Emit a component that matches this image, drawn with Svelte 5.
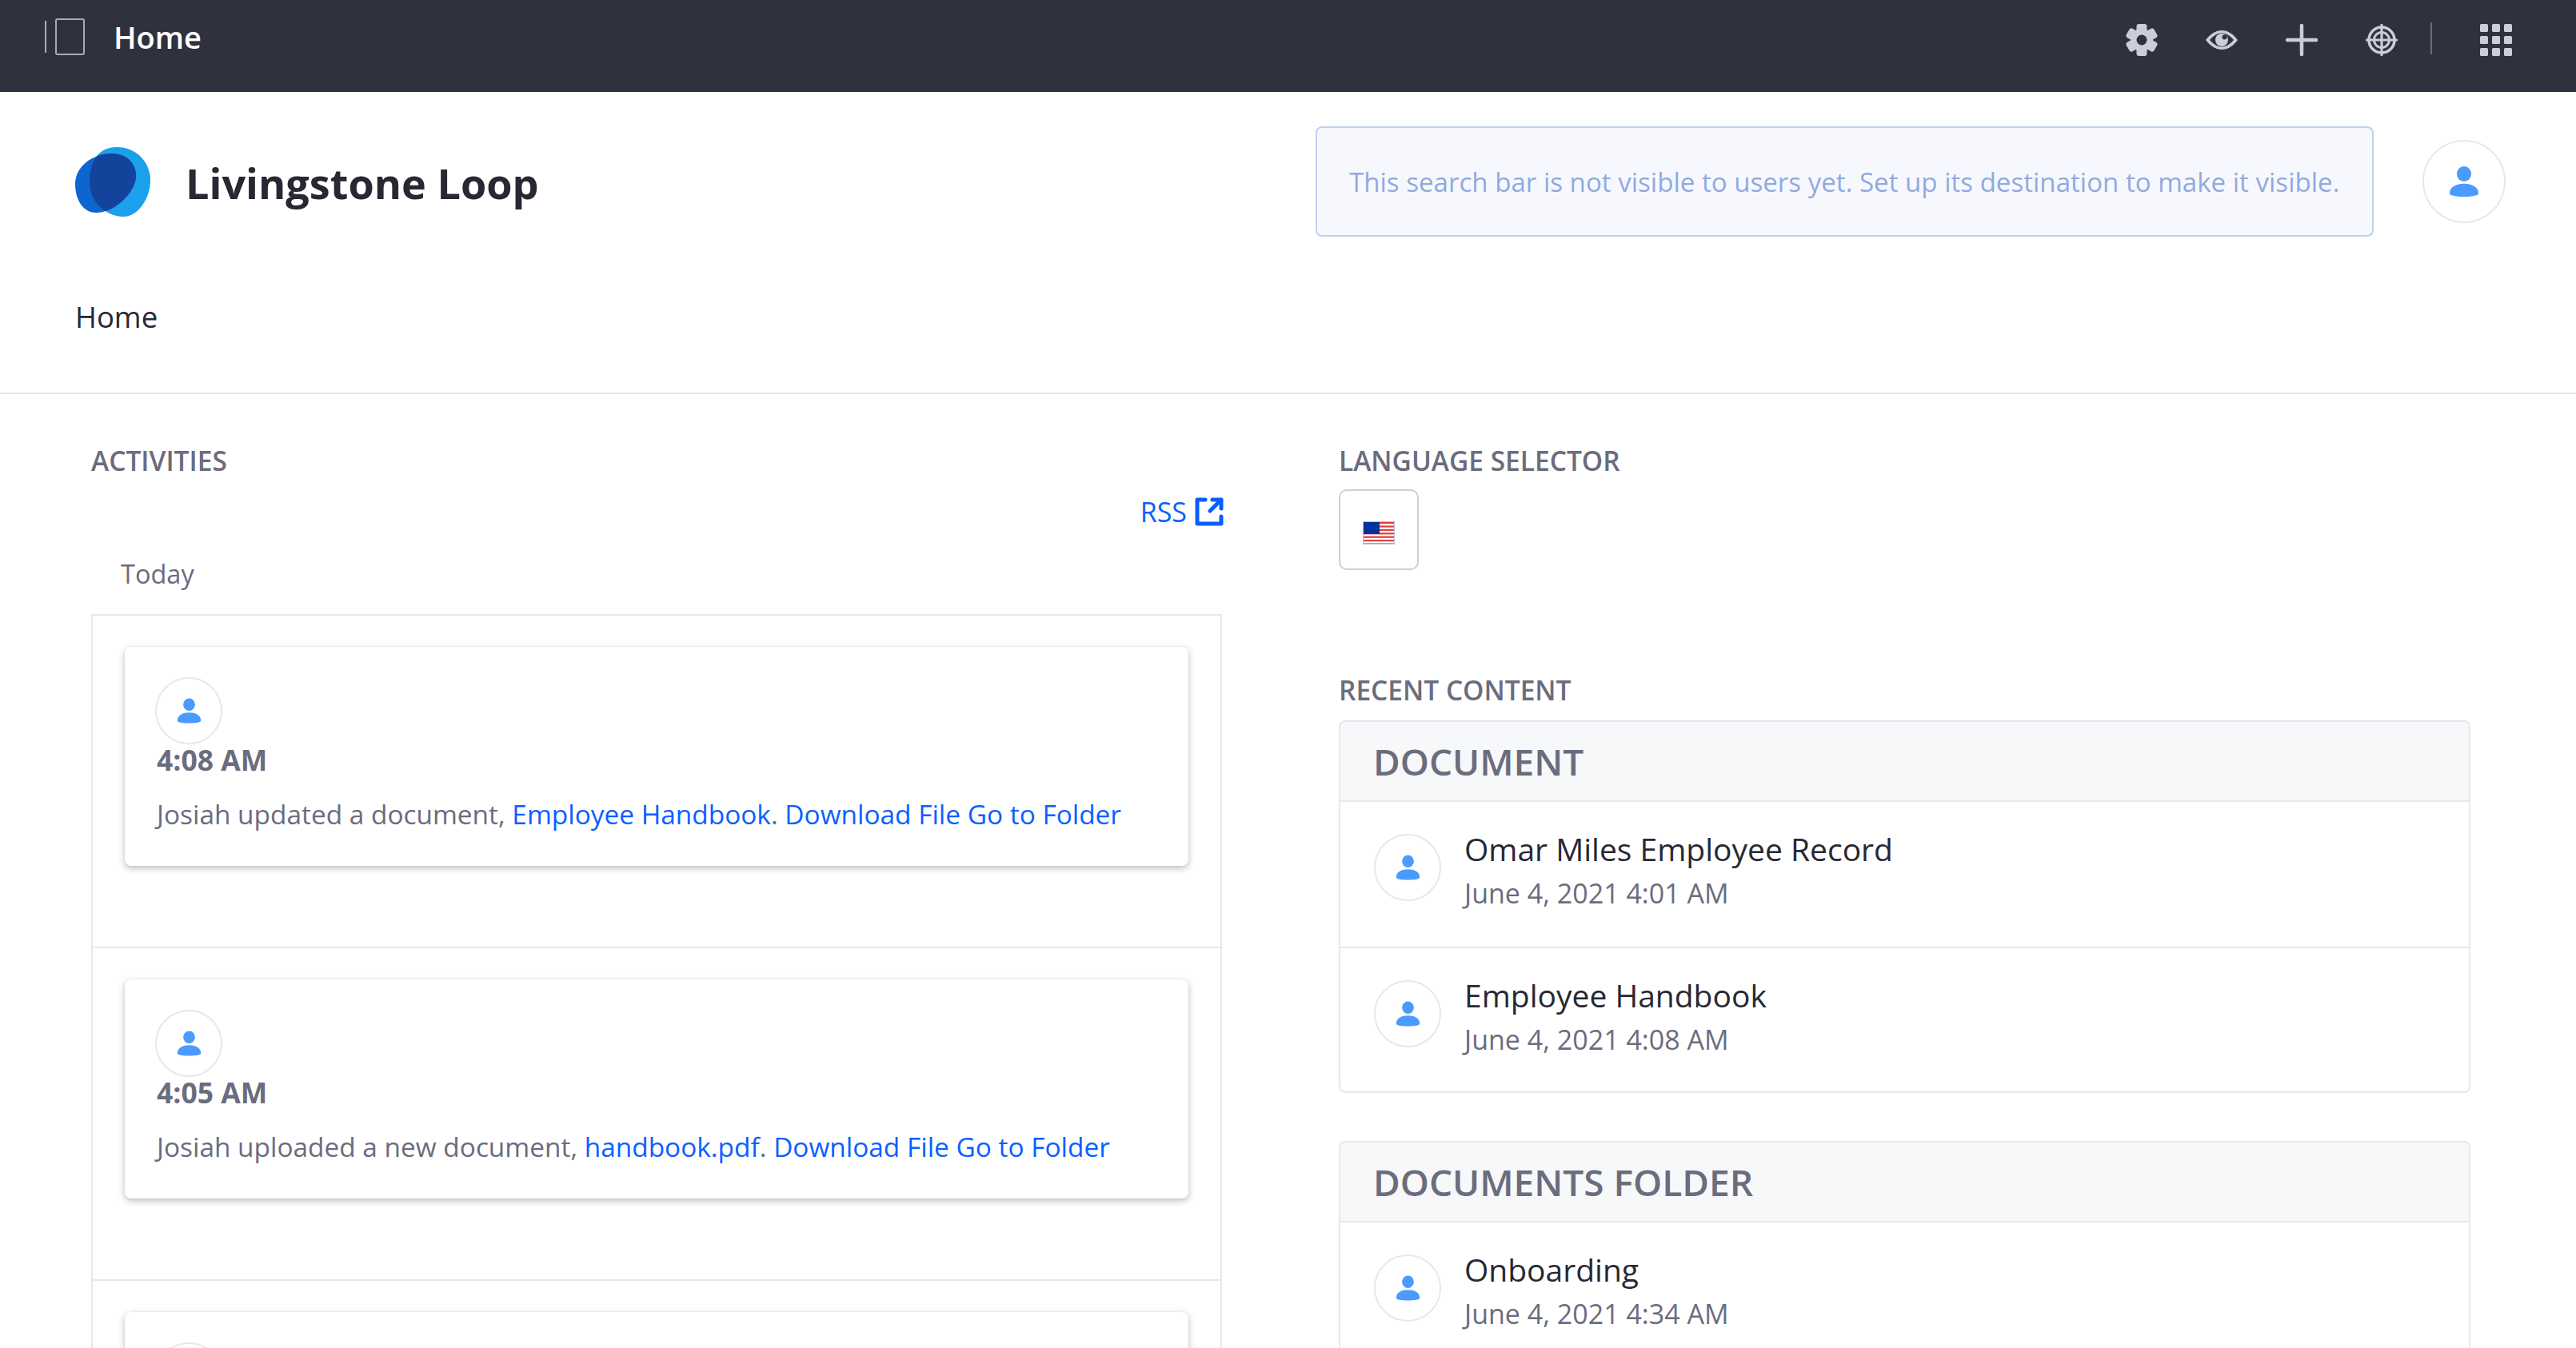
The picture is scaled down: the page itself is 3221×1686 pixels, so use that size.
<script>
	const documents = [
		{ title: 'Omar Miles Employee Record', date: 'June 4, 2021 4:01 AM' },
		{ title: 'Employee Handbook', date: 'June 4, 2021 4:08 AM' }
	];
	const activities = [
		{ time: '4:08 AM', text: 'Josiah updated a document, ', link: 'Employee Handbook' },
		{ time: '4:05 AM', text: 'Josiah uploaded a new document, ', link: 'handbook.pdf' }
	];
</script>

{#snippet avatar(big)}
	<span class="avatar" class:big>
		<svg viewBox="0 0 40 40" aria-hidden="true">
			<ellipse cx="20" cy="10" rx="9.5" ry="10" />
			<path d="M20 23C30 23 39 27 39 36C39 38 32 40 20 40C8 40 1 38 1 36C1 27 10 23 20 23Z" />
		</svg>
	</span>
{/snippet}

<div class="topbar">
	<div class="bar-left">
		<svg class="sidebar-icon" viewBox="0 0 50 46" aria-hidden="true">
			<rect x="0" y="3" width="2" height="40" />
			<rect x="14" y="1" width="35" height="44" rx="2" />
		</svg>
		<span class="bar-title">Home</span>
	</div>
	<div class="bar-icons">
		<svg viewBox="0 0 40 40" aria-hidden="true">
			<g fill="#cdcdd8">
				<rect x="13.5" y="0" width="13" height="40" rx="3" />
				<rect x="13.5" y="0" width="13" height="40" rx="3" transform="rotate(60 20 20)" />
				<rect x="13.5" y="0" width="13" height="40" rx="3" transform="rotate(120 20 20)" />
				<circle cx="20" cy="20" r="14" />
			</g>
			<circle cx="20" cy="20" r="6.5" fill="#30313f" />
		</svg>
		<svg viewBox="0 0 40 40" aria-hidden="true">
			<path fill="#cdcdd8" d="M0 20C6 12 13 8 20 8C27 8 34 12 40 20C34 28 27 32 20 32C13 32 6 28 0 20Z" />
			<path fill="#30313f" d="M5 20C10 14 15 11.5 20 11.5C25 11.5 30 14 35 20C30 26 25 28.5 20 28.5C15 28.5 10 26 5 20Z" />
			<circle cx="20" cy="20" r="8" fill="#cdcdd8" />
			<circle cx="23.5" cy="16.5" r="3" fill="#30313f" />
		</svg>
		<svg viewBox="0 0 40 40" aria-hidden="true">
			<path d="M20 2V38M2 20H38" fill="none" stroke="#cdcdd8" stroke-width="4.5" stroke-linecap="round" />
		</svg>
		<svg viewBox="0 0 40 40" aria-hidden="true" fill="none" stroke="#cdcdd8">
			<circle cx="20" cy="20" r="16" stroke-width="3.5" />
			<circle cx="20" cy="20" r="9.5" stroke-width="3" />
			<path d="M20 1.5V38.5M1.5 20H38.5" stroke-width="3.2" stroke-linecap="round" />
		</svg>
		<span class="bar-sep"></span>
		<svg viewBox="0 0 40 40" aria-hidden="true" fill="#cdcdd8">
			{#each [0, 15, 30] as y}
				{#each [0, 15, 30] as x}
					<rect x={x} y={y} width="10" height="10" rx="1.5" />
				{/each}
			{/each}
		</svg>
	</div>
</div>

<header class="site-head">
	<div class="brand-row">
		<div class="brand">
			<svg class="logo" viewBox="0 0 94 87" aria-hidden="true">
				<defs>
					<clipPath id="blob">
						<path d="M18 44C18 22 26 0 52 0C76 0 94 18 94 42C94 62 80 87 60 87C40 87 18 70 18 44Z" />
					</clipPath>
				</defs>
				<path fill="#1ba0ec" d="M18 44C18 22 26 0 52 0C76 0 94 18 94 42C94 62 80 87 60 87C40 87 18 70 18 44Z" />
				<path fill="#0b66d0" d="M0 46C0 24 22 8 46 8C66 8 76 22 76 36C76 56 50 82 26 82C10 82 0 66 0 46Z" />
				<path fill="#14439b" clip-path="url(#blob)" d="M0 46C0 24 22 8 46 8C66 8 76 22 76 36C76 56 50 82 26 82C10 82 0 66 0 46Z" />
			</svg>
			<span class="brand-name">Livingstone Loop</span>
		</div>
		<div class="search-note">This search bar is not visible to users yet. Set up its destination to make it visible.</div>
		{@render avatar(true)}
	</div>
	<nav class="site-nav">Home</nav>
</header>

<main class="columns">
	<section>
		<h3 class="label">ACTIVITIES</h3>
		<div class="rss-row">
			<a class="rss" href="#rss">RSS
				<svg viewBox="0 0 36 36" aria-hidden="true" fill="none" stroke="#0b5fff" stroke-width="5" stroke-linecap="round" stroke-linejoin="round">
					<path d="M13 3H3V33H33V24" />
					<path d="M22 3H33V14M33 3L19 17" />
				</svg>
			</a>
		</div>
		<div class="today">Today</div>
		<div class="activity-box">
			{#each activities as item}
				<div class="activity-row">
					<article class="card">
						{@render avatar(false)}
						<div class="time">{item.time}</div>
						<p class="entry">{item.text}<a href="#doc">{item.link}</a>. <a href="#file">Download File</a> <a href="#folder">Go to Folder</a></p>
					</article>
				</div>
			{/each}
			<div class="activity-row">
				<article class="card">
					{@render avatar(false)}
				</article>
			</div>
		</div>
	</section>

	<section>
		<h3 class="label">LANGUAGE SELECTOR</h3>
		<button class="flag-btn" aria-label="English">
			<svg viewBox="0 0 40 29" aria-hidden="true">
				<rect width="40" height="29" fill="#fff" />
				{#each [0, 1, 2, 3, 4, 5, 6] as i}
					<rect y={i * 4.4 + 1} width="40" height="2.2" fill="#e0403f" />
				{/each}
				<rect width="21" height="16" fill="#0033a0" />
				<rect x="0.5" y="0.5" width="39" height="28" fill="none" stroke="#b4bfd0" />
			</svg>
		</button>

		<h3 class="label recent">RECENT CONTENT</h3>
		<div class="panel">
			<div class="panel-head">DOCUMENT</div>
			{#each documents as doc}
				<div class="doc-row">
					{@render avatar(false)}
					<div>
						<div class="doc-title">{doc.title}</div>
						<div class="doc-date">{doc.date}</div>
					</div>
				</div>
			{/each}
		</div>
		<div class="panel second">
			<div class="panel-head">DOCUMENTS FOLDER</div>
			<div class="doc-row">
				{@render avatar(false)}
				<div>
					<div class="doc-title">Onboarding</div>
					<div class="doc-date">June 4, 2021 4:34 AM</div>
				</div>
			</div>
		</div>
	</section>
</main>

<style>
	:global(body) {
		background: #fff;
		color: #272833;
		font-family: "Open Sans", "Noto Sans", sans-serif;
		font-size: 34px;
		height: 100vh;
		overflow: hidden;
	}
	a {
		color: #0b5fff;
		text-decoration: none;
	}

	.topbar {
		display: flex;
		justify-content: space-between;
		height: 115px;
		padding: 23px 80px 0 56px;
		box-sizing: border-box;
		background: #30313f;
	}
	.bar-left {
		display: flex;
		align-items: flex-start;
		gap: 36px;
	}
	.sidebar-icon {
		width: 50px;
		height: 46px;
	}
	.sidebar-icon rect:first-child {
		fill: #a9a9b8;
	}
	.sidebar-icon rect:last-child {
		fill: none;
		stroke: #a9a9b8;
		stroke-width: 2;
	}
	.bar-title {
		color: #fff;
		font-size: 38px;
		font-weight: 600;
		line-height: 46px;
	}
	.bar-icons {
		display: flex;
		align-items: flex-start;
		padding-top: 7px;
		gap: 60px;
	}
	.bar-icons svg {
		width: 40px;
		height: 40px;
	}
	.bar-sep {
		width: 2px;
		height: 40px;
		margin: -2px 0 0 -19px;
		background: #6b6c7e;
	}

	.site-head {
		border-bottom: 2px solid #e7e7ed;
		height: 378px;
		padding: 43px 88px 0 94px;
		box-sizing: border-box;
	}
	.brand-row {
		display: flex;
		align-items: center;
	}
	.brand {
		display: flex;
		align-items: center;
		gap: 44px;
		flex: 1;
	}
	.logo {
		width: 94px;
		height: 87px;
	}
	.brand-name {
		margin-top: 3px;
		font-size: 52.2px;
		font-weight: 700;
		line-height: 72px;
	}
	.search-note {
		width: 1323px;
		height: 138px;
		box-sizing: border-box;
		margin-right: 61px;
		padding: 0 40px;
		font-size: 33.1px;
		line-height: 136px;
		white-space: nowrap;
		background: #f7f8fe;
		border: 2px solid #bdd1f0;
		border-radius: 8px;
		color: #8fabdf;
	}
	.site-nav {
		margin-top: 75px;
		font-size: 36.5px;
		font-weight: 500;
		line-height: 50px;
	}

	.avatar {
		display: flex;
		align-items: center;
		justify-content: center;
		flex: none;
		width: 84px;
		height: 84px;
		box-sizing: border-box;
		border: 2px solid #e7e7ed;
		border-radius: 50%;
		background: #fff;
	}
	.avatar svg {
		width: 31px;
		height: 36px;
		fill: #4b9bff;
	}
	.avatar.big {
		width: 104px;
		height: 104px;
	}
	.avatar.big svg {
		width: 38px;
		height: 44px;
	}

	.columns {
		display: grid;
		grid-template-columns: 1414px 1415px;
		gap: 146px;
		padding: 58px 0 0 114px;
	}
	.label {
		margin: 0;
		color: #6b6c7e;
		font-size: 33.5px;
		font-weight: 600;
		line-height: 50px;
	}
	.rss-row {
		display: flex;
		justify-content: flex-end;
		margin-top: 14px;
		height: 50px;
	}
	.rss {
		display: flex;
		align-items: center;
		gap: 10px;
		margin-right: -2px;
		line-height: 50px;
	}
	.rss svg {
		width: 36px;
		height: 36px;
	}
	.today {
		margin: 28px 0 25px 37px;
		color: #6b6c7e;
		font-size: 32.5px;
		line-height: 50px;
	}
	.activity-box {
		border: 2px solid #e7e7ed;
	}
	.activity-row {
		padding: 39px 40px 101px;
		border-bottom: 2px solid #e7e7ed;
	}
	.card {
		padding: 38px 40px 38px;
		border-radius: 8px;
		background: #fff;
		box-shadow: 0 3px 8px rgba(39, 40, 51, 0.3), 0 0 2px rgba(39, 40, 51, 0.08);
	}
	.card .avatar {
		margin-left: -2px;
	}
	.time {
		margin-top: -2px;
		color: #6b6c7e;
		font-size: 35.5px;
		font-weight: 700;
		line-height: 42px;
	}
	.entry {
		margin: 20px 0 0;
		color: #6b6c7e;
		font-size: 33.4px;
		line-height: 54px;
		white-space: nowrap;
	}

	.flag-btn {
		display: flex;
		align-items: center;
		justify-content: center;
		width: 100px;
		height: 101px;
		margin-top: 11px;
		padding: 8px 0 0;
		border: 2px solid #cdced9;
		border-radius: 10px;
		background: #fff;
	}
	.flag-btn svg {
		width: 40px;
		height: 29px;
	}
	.recent {
		margin-top: 125px;
	}
	.panel {
		margin-top: 13px;
		border: 2px solid #e7e7ed;
		border-radius: 8px;
		overflow: hidden;
	}
	.panel.second {
		margin-top: 60px;
	}
	.panel-head {
		height: 100px;
		box-sizing: border-box;
		padding-left: 41px;
		background: #f7f8f9;
		border-bottom: 2px solid #e7e7ed;
		color: #6b6c7e;
		font-size: 46px;
		font-weight: 600;
		line-height: 98px;
	}
	.doc-row {
		display: flex;
		gap: 29px;
		height: 183px;
		box-sizing: border-box;
		padding: 30px 0 0 42px;
		border-bottom: 2px solid #e7e7ed;
	}
	.doc-row:last-child {
		border-bottom: none;
		height: 179px;
	}
	.doc-row .avatar {
		margin-top: 10px;
	}
	.doc-title {
		font-size: 39px;
		font-weight: 500;
		line-height: 57px;
	}
	.doc-date {
		color: #6b6c7e;
		line-height: 55px;
	}
</style>
